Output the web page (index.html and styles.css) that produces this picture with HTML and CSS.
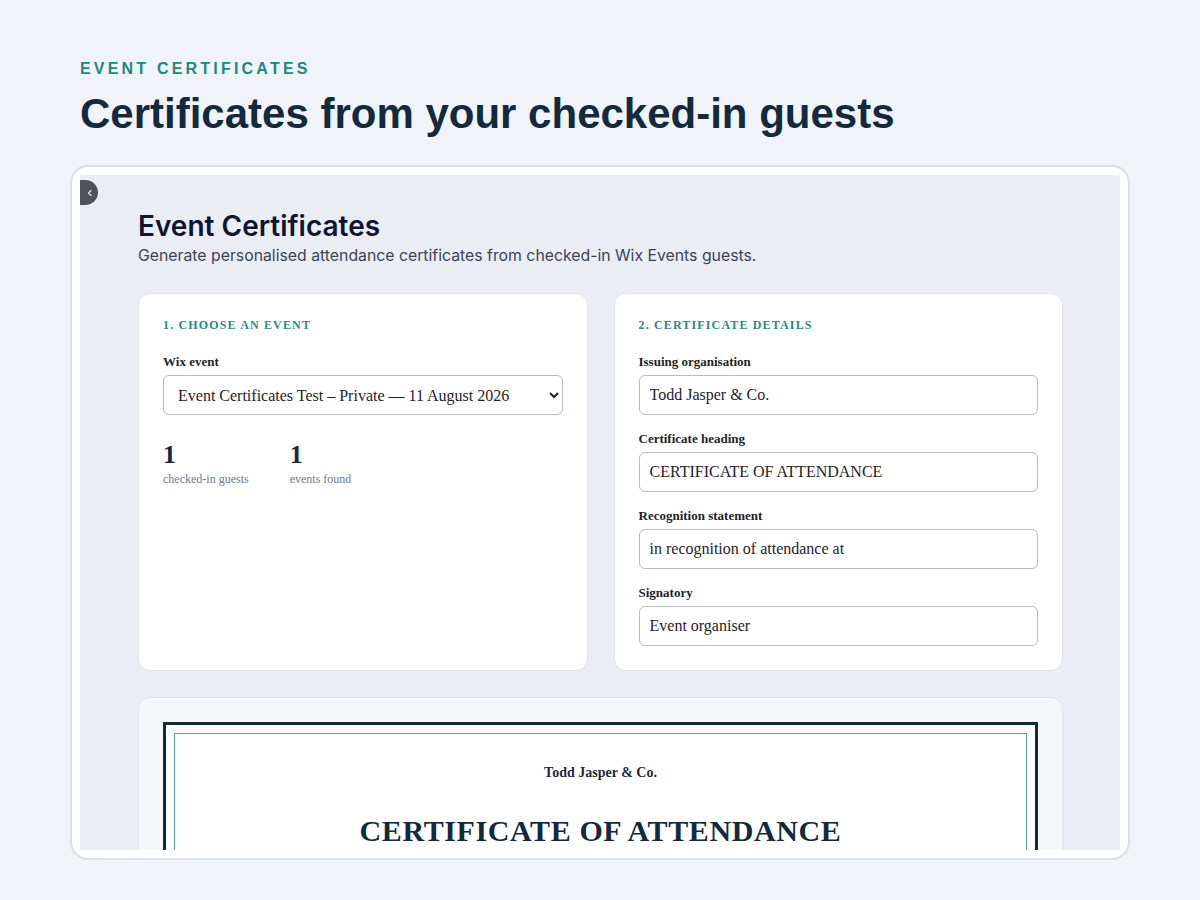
FILE: index.html
```html
<!DOCTYPE html>
<html lang="en">
<head>
<meta charset="utf-8">
<title>Event Certificates</title>
<link rel="stylesheet" href="styles.css">
</head>
<body>
  <header class="hero">
    <p class="eyebrow">EVENT CERTIFICATES</p>
    <h1 class="headline">Certificates from your checked-in guests</h1>
  </header>

  <div class="frame">
    <div class="viewport">
      <button class="collapse" aria-label="Collapse sidebar">
        <svg width="8" height="8" viewBox="0 0 8 8"><path d="M5 1.5 L2.5 4 L5 6.5" fill="none" stroke="#e6e8ec" stroke-width="1.2" stroke-linecap="round" stroke-linejoin="round"/></svg>
      </button>

      <main class="app">
        <h2 class="app-title">Event Certificates</h2>
        <p class="app-sub">Generate personalised attendance certificates from checked-in Wix Events guests.</p>

        <div class="grid">
          <section class="card">
            <h3 class="card-title">1. CHOOSE AN EVENT</h3>
            <div class="field">
              <label class="label" for="event">Wix event</label>
              <select id="event" class="control select">
                <option>Event Certificates Test – Private — 11 August 2026</option>
              </select>
            </div>
            <div class="stats">
              <div class="stat">
                <div class="stat-num">1</div>
                <div class="stat-label">checked-in guests</div>
              </div>
              <div class="stat">
                <div class="stat-num">1</div>
                <div class="stat-label">events found</div>
              </div>
            </div>
          </section>

          <section class="card">
            <h3 class="card-title">2. CERTIFICATE DETAILS</h3>
            <div class="fields">
              <div class="field">
                <label class="label" for="org">Issuing organisation</label>
                <input id="org" class="control" type="text" value="Todd Jasper &amp; Co.">
              </div>
              <div class="field">
                <label class="label" for="heading">Certificate heading</label>
                <input id="heading" class="control" type="text" value="CERTIFICATE OF ATTENDANCE">
              </div>
              <div class="field">
                <label class="label" for="statement">Recognition statement</label>
                <input id="statement" class="control" type="text" value="in recognition of attendance at">
              </div>
              <div class="field">
                <label class="label" for="signatory">Signatory</label>
                <input id="signatory" class="control" type="text" value="Event organiser">
              </div>
            </div>
          </section>
        </div>

        <section class="preview">
          <div class="cert">
            <div class="cert-inner">
              <p class="cert-org">Todd Jasper &amp; Co.</p>
              <p class="cert-heading">CERTIFICATE OF ATTENDANCE</p>
            </div>
          </div>
        </section>
      </main>
    </div>
  </div>
</body>
</html>
```

FILE: styles.css
```css
* { box-sizing: border-box; }

body {
  margin: 0;
  background: #f0f4f8;
  font-family: "Liberation Sans", Arial, sans-serif;
}

/* Page header */
.hero {
  padding: 59px 80px 0;
}
.eyebrow {
  margin: 0;
  font-size: 16px;
  line-height: 20px;
  font-weight: 700;
  letter-spacing: 0.2em;
  color: #1a8a7e;
}
.headline {
  margin: 10px 0 0;
  font-size: 42px;
  line-height: 50px;
  font-weight: 700;
  color: #13293d;
}

/* Browser-like frame holding the app */
.frame {
  margin: 26px 70px 0;
  background: #ffffff;
  border: 2px solid #d8dfe6;
  border-radius: 18px;
  padding: 8px;
  height: 695px;
}
.viewport {
  position: relative;
  height: 675px;
  overflow: hidden;
  background: #eaeef4;
}
.collapse {
  position: absolute;
  left: 0;
  top: 5px;
  width: 18px;
  height: 25px;
  padding: 0 0 0 1px;
  border: 0;
  border-radius: 0 13px 13px 0;
  background: #4e525a;
  display: flex;
  align-items: center;
  justify-content: center;
}
.collapse svg { display: block; }

/* App content */
.app {
  padding: 34px 57px 0 58px;
}
.app-title {
  margin: 0;
  font-family: Inter, "Noto Sans", sans-serif;
  font-size: 28px;
  line-height: 34px;
  font-weight: 600;
  color: #0f1530;
}
.app-sub {
  margin: 2px 0 0;
  font-family: Inter, "Noto Sans", sans-serif;
  font-size: 15.8px;
  line-height: 21px;
  color: #3e4356;
}

.grid {
  display: grid;
  grid-template-columns: 1fr 1fr;
  gap: 26px;
  margin-top: 27px;
}
.card {
  background: #ffffff;
  border: 1px solid #dfe4ea;
  border-radius: 12px;
  padding: 24px;
  font-family: "Liberation Serif", "Times New Roman", serif;
}
.card-title {
  margin: 0 0 22px;
  font-size: 12px;
  line-height: 14px;
  font-weight: 700;
  letter-spacing: 1.15px;
  color: #258c7f;
}
.fields {
  display: flex;
  flex-direction: column;
  gap: 16px;
}
.field {
  display: flex;
  flex-direction: column;
}
.label {
  font-size: 13px;
  line-height: 15px;
  font-weight: 700;
  color: #1f2328;
  margin-bottom: 6px;
}
.control {
  width: 100%;
  height: 40px;
  padding: 0 10px;
  border: 1px solid #b6bbc3;
  border-radius: 6px;
  background: #ffffff;
  font-family: "Liberation Serif", "Times New Roman", serif;
  font-size: 16px;
  color: #1f2328;
}

.stats {
  display: flex;
  gap: 41px;
  margin-top: 27px;
}
.stat-num {
  font-size: 26px;
  line-height: 26px;
  font-weight: 700;
  color: #13293d;
}
.stat-label {
  margin-top: 4px;
  font-size: 12px;
  line-height: 14px;
  color: #6f7b88;
}

/* Certificate preview */
.preview {
  margin-top: 26px;
  background: #f5f8fb;
  border: 1px solid #e0e5eb;
  border-radius: 12px;
  padding: 24px;
  font-family: "Liberation Serif", "Times New Roman", serif;
}
.cert {
  background: #ffffff;
  border: 3px solid #13293d;
  padding: 8px;
}
.cert-inner {
  border: 1px solid #5c9f99;
  padding: 31px 40px 0;
  min-height: 260px;
  text-align: center;
  color: #13293d;
}
.cert-org {
  margin: 0;
  font-size: 14px;
  line-height: 16px;
  font-weight: 700;
  color: #1f2a36;
}
.cert-heading {
  margin: 32px 0 0;
  font-size: 30px;
  line-height: 36px;
  font-weight: 700;
  letter-spacing: 0.6px;
}
```
